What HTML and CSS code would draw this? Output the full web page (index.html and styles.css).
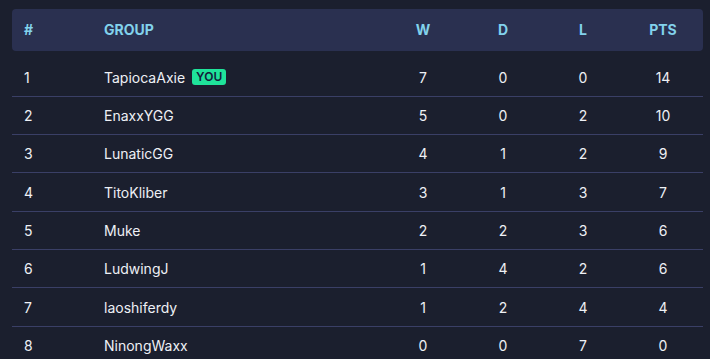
FILE: index.html
```html
<!DOCTYPE html>
<html>
<head>
<meta charset="utf-8">
<link rel="stylesheet" href="styles.css">
</head>
<body>
<div class="standings">
  <div class="row head">
    <div class="c rank">#</div>
    <div class="c name">GROUP</div>
    <div class="c num">W</div>
    <div class="c num">D</div>
    <div class="c num">L</div>
    <div class="c num">PTS</div>
  </div>
  <div class="body">
    <div class="row"><div class="c rank">1</div><div class="c name">TapiocaAxie <span class="you">YOU</span></div><div class="c num">7</div><div class="c num">0</div><div class="c num">0</div><div class="c num">14</div></div>
    <div class="row"><div class="c rank">2</div><div class="c name">EnaxxYGG</div><div class="c num">5</div><div class="c num">0</div><div class="c num">2</div><div class="c num">10</div></div>
    <div class="row"><div class="c rank">3</div><div class="c name">LunaticGG</div><div class="c num">4</div><div class="c num">1</div><div class="c num">2</div><div class="c num">9</div></div>
    <div class="row"><div class="c rank">4</div><div class="c name">TitoKliber</div><div class="c num">3</div><div class="c num">1</div><div class="c num">3</div><div class="c num">7</div></div>
    <div class="row"><div class="c rank">5</div><div class="c name">Muke</div><div class="c num">2</div><div class="c num">2</div><div class="c num">3</div><div class="c num">6</div></div>
    <div class="row"><div class="c rank">6</div><div class="c name">LudwingJ</div><div class="c num">1</div><div class="c num">4</div><div class="c num">2</div><div class="c num">6</div></div>
    <div class="row"><div class="c rank">7</div><div class="c name">laoshiferdy</div><div class="c num">1</div><div class="c num">2</div><div class="c num">4</div><div class="c num">4</div></div>
    <div class="row"><div class="c rank">8</div><div class="c name">NinongWaxx</div><div class="c num">0</div><div class="c num">0</div><div class="c num">7</div><div class="c num">0</div></div>
  </div>
</div>
</body>
</html>
```
FILE: styles.css
```css
html, body {
  margin: 0;
  padding: 0;
  background: #1b1f2e;
  font-family: Inter, "Noto Sans", sans-serif;
  color: #eef0f5;
}
.standings {
  padding: 9px 7px 0 12px;
}
.row {
  display: flex;
  align-items: center;
}
.c {
  box-sizing: border-box;
}
.rank {
  width: 80px;
  padding-left: 12px;
}
.name {
  flex: 1;
  padding-left: 12px;
  display: flex;
  align-items: center;
  gap: 7px;
}
.num {
  width: 80px;
  text-align: center;
}
.head {
  background: #2a3050;
  border-radius: 4px;
  height: 41.7px;
  font-size: 14px;
  font-weight: 700;
  color: #82d2ec;
}
.body {
  margin-top: 7.7px;
}
.body .row {
  height: 38.33px;
  box-sizing: border-box;
  border-bottom: 1px solid #3a3f66;
  font-size: 14px;
}
.you {
  background: #1fe39a;
  color: #13203a;
  font-size: 12px;
  font-weight: 600;
  line-height: 16px;
  padding: 0 4px;
  border-radius: 3px;
}
```
